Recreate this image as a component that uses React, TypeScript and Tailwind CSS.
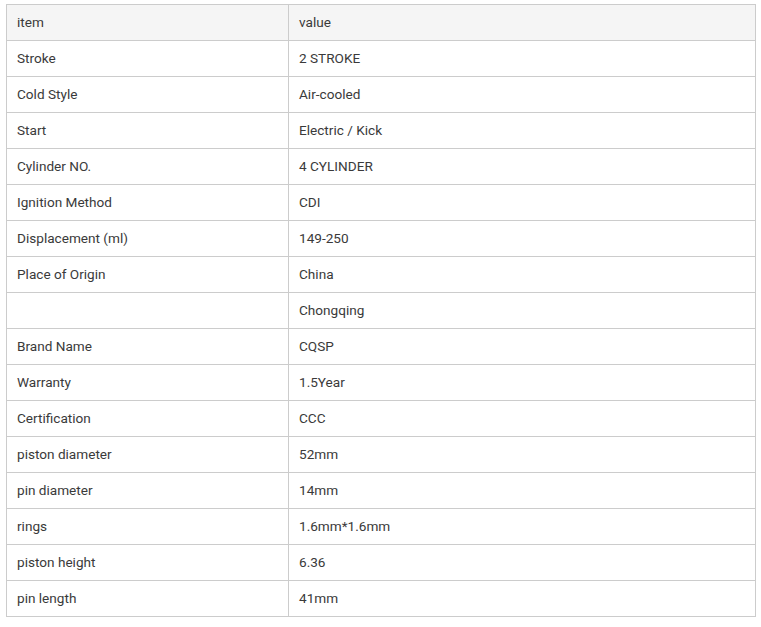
import React from 'react';

const rows: [string, string][] = [
  ['Stroke', '2 STROKE'],
  ['Cold Style', 'Air-cooled'],
  ['Start', 'Electric / Kick'],
  ['Cylinder NO.', '4 CYLINDER'],
  ['Ignition Method', 'CDI'],
  ['Displacement (ml)', '149-250'],
  ['Place of Origin', 'China'],
  ['', 'Chongqing'],
  ['Brand Name', 'CQSP'],
  ['Warranty', '1.5Year'],
  ['Certification', 'CCC'],
  ['piston diameter', '52mm'],
  ['pin diameter', '14mm'],
  ['rings', '1.6mm*1.6mm'],
  ['piston height', '6.36'],
  ['pin length', '41mm'],
];

const App: React.FC = () => {
  return (
    <div className="min-h-screen bg-white pt-[4px] pl-[6px] font-['Roboto',sans-serif] text-[13.6px] text-[#3a3a3a]">
      <table className="w-[750px] border-collapse table-fixed">
        <colgroup>
          <col className="w-[282px]" />
          <col />
        </colgroup>
        <thead>
          <tr className="h-[36px] bg-[#f5f5f5]">
            <td className="border border-[#cccccc] px-[10px]">item</td>
            <td className="border border-[#cccccc] px-[10px]">value</td>
          </tr>
        </thead>
        <tbody>
          {rows.map(([k, v], i) => (
            <tr key={i} className="h-[36px]">
              <td className="border border-[#cccccc] px-[10px]">{k}</td>
              <td className="border border-[#cccccc] px-[10px]">{v}</td>
            </tr>
          ))}
        </tbody>
      </table>
    </div>
  );
};

export default App;
